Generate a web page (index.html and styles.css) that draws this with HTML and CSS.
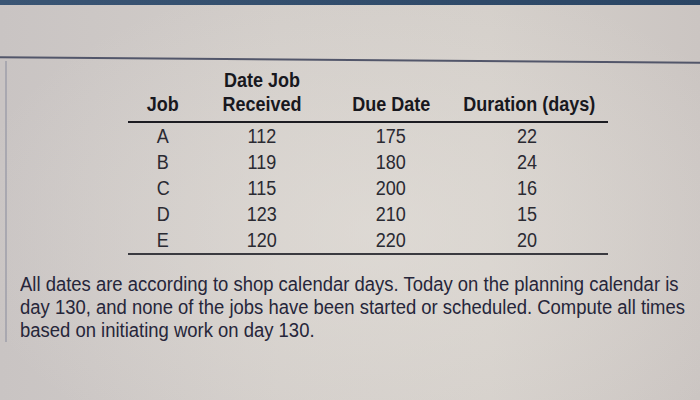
FILE: index.html
```html
<!DOCTYPE html>
<html>
<head>
<meta charset="utf-8">
<link rel="stylesheet" href="styles.css">
</head>
<body>
<div class="screen">
  <div class="topbar"></div>
  <div class="upper"></div>
  <div class="divider"></div>
  <div class="content">
    <table class="jobs">
      <thead>
        <tr>
          <th class="c1"><span>Job</span></th>
          <th class="c2"><span>Date Job<br>Received</span></th>
          <th class="c3"><span>Due Date</span></th>
          <th class="c4"><span>Duration (days)</span></th>
        </tr>
      </thead>
      <tbody>
        <tr><td><span>A</span></td><td><span>112</span></td><td><span>175</span></td><td><span>22</span></td></tr>
        <tr><td><span>B</span></td><td><span>119</span></td><td><span>180</span></td><td><span>24</span></td></tr>
        <tr><td><span>C</span></td><td><span>115</span></td><td><span>200</span></td><td><span>16</span></td></tr>
        <tr><td><span>D</span></td><td><span>123</span></td><td><span>210</span></td><td><span>15</span></td></tr>
        <tr class="last"><td><span>E</span></td><td><span>120</span></td><td><span>220</span></td><td><span>20</span></td></tr>
      </tbody>
    </table>
    <p class="note">All dates are according to shop calendar days. Today on the planning calendar is<br>day 130, and none of the jobs have been started or scheduled. Compute all times<br>based on initiating work on day 130.</p>
  </div>
  <div class="bottom"></div>
</div>
</body>
</html>
```
FILE: styles.css
```css
html, body {
  margin: 0;
  padding: 0;
}
body {
  width: 700px;
  height: 400px;
  overflow: hidden;
  font-family: "Liberation Sans", Arial, sans-serif;
}
.screen {
  width: 700px;
  height: 400px;
  display: flex;
  flex-direction: column;
  background:
    radial-gradient(ellipse 420px 260px at 380px 230px, rgba(230,226,220,0.55), rgba(230,226,220,0) 100%),
    linear-gradient(to right, #c9c4c3 0%, #d2cdc9 40%, #d4cfca 70%, #cbc5c2 100%);
}
.topbar {
  height: 5px;
  background: linear-gradient(to right, #3a5574, #2a4564);
  flex: none;
}
.upper {
  height: 54px;
  flex: none;
}
.divider {
  height: 2px;
  background: #52566a;
  flex: none;
  transform: rotate(0.45deg);
}
.content {
  flex: 1;
  margin-left: 5px;
  border-left: 2px solid #a9a8b0;
  padding-left: 13px;
  margin-bottom: 58px;
  display: flex;
  flex-direction: column;
}
.jobs {
  border-collapse: collapse;
  table-layout: fixed;
  margin-left: 108px;
  margin-top: 7px;
  width: 480px;
  color: #1e1e24;
  font-size: 20px;
}
.jobs span {
  display: inline-block;
  transform: scaleX(0.9);
  transform-origin: center;
  white-space: nowrap;
}
.jobs th {
  font-weight: bold;
  vertical-align: bottom;
  line-height: 24px;
  padding: 0 0 5px 0;
  border-bottom: 2px solid #1c1c22;
  color: #18181e;
}
.jobs td {
  text-align: center;
  line-height: 26px;
  padding: 0;
  color: #2a2a32;
}
.jobs tr.last td {
  border-bottom: 2px solid #3a3a40;
}
.jobs .c1 { width: 70px; }
.jobs .c2 { width: 128px; }
.jobs .c3 { width: 130px; }
.jobs .c4 { width: 142px; }
.jobs td:nth-child(4), .jobs th.c4 { padding-right: 10px; }
.note {
  margin: 18px 0 0 0;
  font-size: 20px;
  line-height: 23px;
  color: #26263a;
  white-space: nowrap;
  transform: scaleX(0.923);
  transform-origin: left top;
}
.bottom {
  height: 3px;
  background: #ecebea;
  flex: none;
}
```
